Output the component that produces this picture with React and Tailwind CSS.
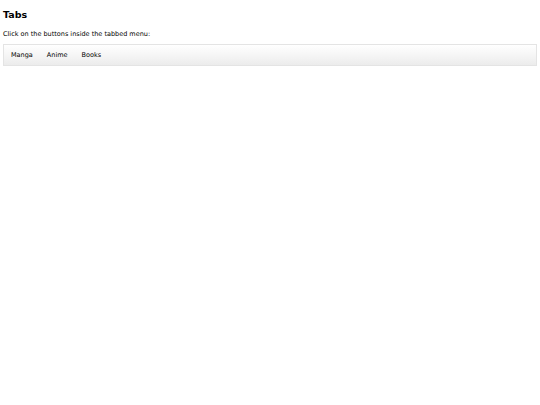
export default function App() {
  const tabs = ["Manga", "Anime", "Books"];

  return (
    <div className="min-h-[405px] bg-white px-[3px] pt-[8px] font-['DejaVu_Sans',sans-serif] text-black">
      <h2 className="text-[9.5px] font-bold leading-[14px]">Tabs</h2>
      <p className="mt-[8px] text-[6.5px] leading-[8px] text-black">
        Click on the buttons inside the tabbed menu:
      </p>
      <div className="mt-[6px] flex h-[22px] items-center border border-[#e4e4e4] bg-gradient-to-b from-white to-[#ececec]">
        {tabs.map((tab) => (
          <button
            key={tab}
            className="px-[7px] text-[6.5px] leading-[20px] text-black"
          >
            {tab}
          </button>
        ))}
      </div>
    </div>
  );
}
